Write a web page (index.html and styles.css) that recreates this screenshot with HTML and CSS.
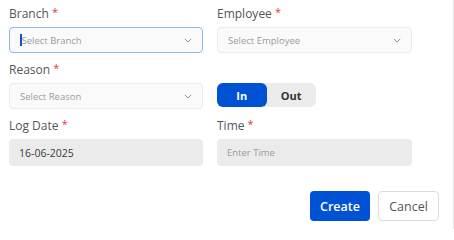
FILE: index.html
```html
<!DOCTYPE html>
<html>
<head>
<meta charset="utf-8">
<link rel="stylesheet" href="styles.css">
</head>
<body>
<div class="panel">
  <div class="grid">
    <div class="field">
      <label class="label">Branch <span class="req">*</span></label>
      <div class="select focused"><span class="caret"></span><span class="ph">Select Branch</span>
        <svg class="chev" viewBox="0 0 10 6" width="8" height="5"><path d="M1 1l4 4 4-4" fill="none" stroke="#888" stroke-width="1.2"/></svg></div>
    </div>
    <div class="field">
      <label class="label">Employee <span class="req">*</span></label>
      <div class="select"><span class="ph">Select Employee</span>
        <svg class="chev" viewBox="0 0 10 6" width="8" height="5"><path d="M1 1l4 4 4-4" fill="none" stroke="#888" stroke-width="1.2"/></svg></div>
    </div>
    <div class="field">
      <label class="label">Reason <span class="req">*</span></label>
      <div class="select"><span class="ph">Select Reason</span>
        <svg class="chev" viewBox="0 0 10 6" width="8" height="5"><path d="M1 1l4 4 4-4" fill="none" stroke="#888" stroke-width="1.2"/></svg></div>
    </div>
    <div class="field toggle-cell">
      <div class="toggle">
        <span class="opt active">In</span>
        <span class="opt">Out</span>
      </div>
    </div>
    <div class="field">
      <label class="label">Log Date <span class="req">*</span></label>
      <div class="input filled">16-06-2025</div>
    </div>
    <div class="field">
      <label class="label">Time <span class="req">*</span></label>
      <div class="input"><span class="ph">Enter Time</span></div>
    </div>
  </div>
  <div class="actions">
    <button class="btn primary">Create</button>
    <button class="btn secondary">Cancel</button>
  </div>
</div>
</body>
</html>
```
FILE: styles.css
```css
html, body {
  margin: 0;
  padding: 0;
  background: #fff;
}
body {
  font-family: "Open Sans", "DejaVu Sans", sans-serif;
  width: 454px;
  height: 229px;
  overflow: hidden;
}
.panel {
  box-sizing: border-box;
  width: 454px;
  height: 229px;
  border-right: 1px solid #e4e4e4;
  padding: 6px 0 0 9px;
}
.grid {
  display: grid;
  grid-template-columns: 194px 195px;
  column-gap: 14px;
  row-gap: 9px;
}
.field {
  display: flex;
  flex-direction: column;
  gap: 5px;
}
.label {
  display: block;
  height: 16px;
  font-size: 12px;
  line-height: 16px;
  color: #555;
}
.req {
  color: #e53935;
  font-size: 11px;
  line-height: 0;
  position: relative;
  top: -2px;
}
.select, .input {
  box-sizing: border-box;
  height: 26px;
  border-radius: 4px;
  display: flex;
  align-items: center;
  padding: 0 10px;
  font-size: 9.5px;
}
.select {
  background: #fafafa;
  border: 1px solid #ececec;
}
.select.focused {
  border: 1px solid #8fb4ee;
}
.caret {
  width: 1.5px;
  height: 12px;
  background: #1a4fd0;
}
.ph {
  color: #9b9b9b;
  flex: 1;
}
.chev {
  flex: none;
}
.input {
  height: 27px;
  background: #ebebeb;
  border: none;
}
.input.filled {
  color: #3a3a3a;
  font-size: 10.5px;
}
.toggle-cell {
  justify-content: flex-end;
  padding-bottom: 2px;
}
.toggle {
  display: flex;
  width: 99px;
  height: 24px;
  background: #ececec;
  border-radius: 6px;
}
.opt {
  flex: 1;
  display: flex;
  align-items: center;
  justify-content: center;
  font-size: 11px;
  font-weight: 700;
  color: #333;
  border-radius: 6px;
}
.opt.active {
  background: #0052d4;
  color: #fff;
}
.actions {
  display: flex;
  justify-content: flex-end;
  gap: 8px;
  width: 430px;
  margin-top: 25px;
}
.btn {
  box-sizing: border-box;
  height: 30px;
  border-radius: 4px;
  font-family: inherit;
  font-size: 12.5px;
  padding: 0;
  cursor: pointer;
}
.btn.primary {
  width: 60px;
  background: #0052d4;
  color: #fff;
  border: none;
  font-weight: 600;
}
.btn.secondary {
  width: 61px;
  background: #fff;
  color: #555;
  border: 1px solid #dcdcdc;
}
```
